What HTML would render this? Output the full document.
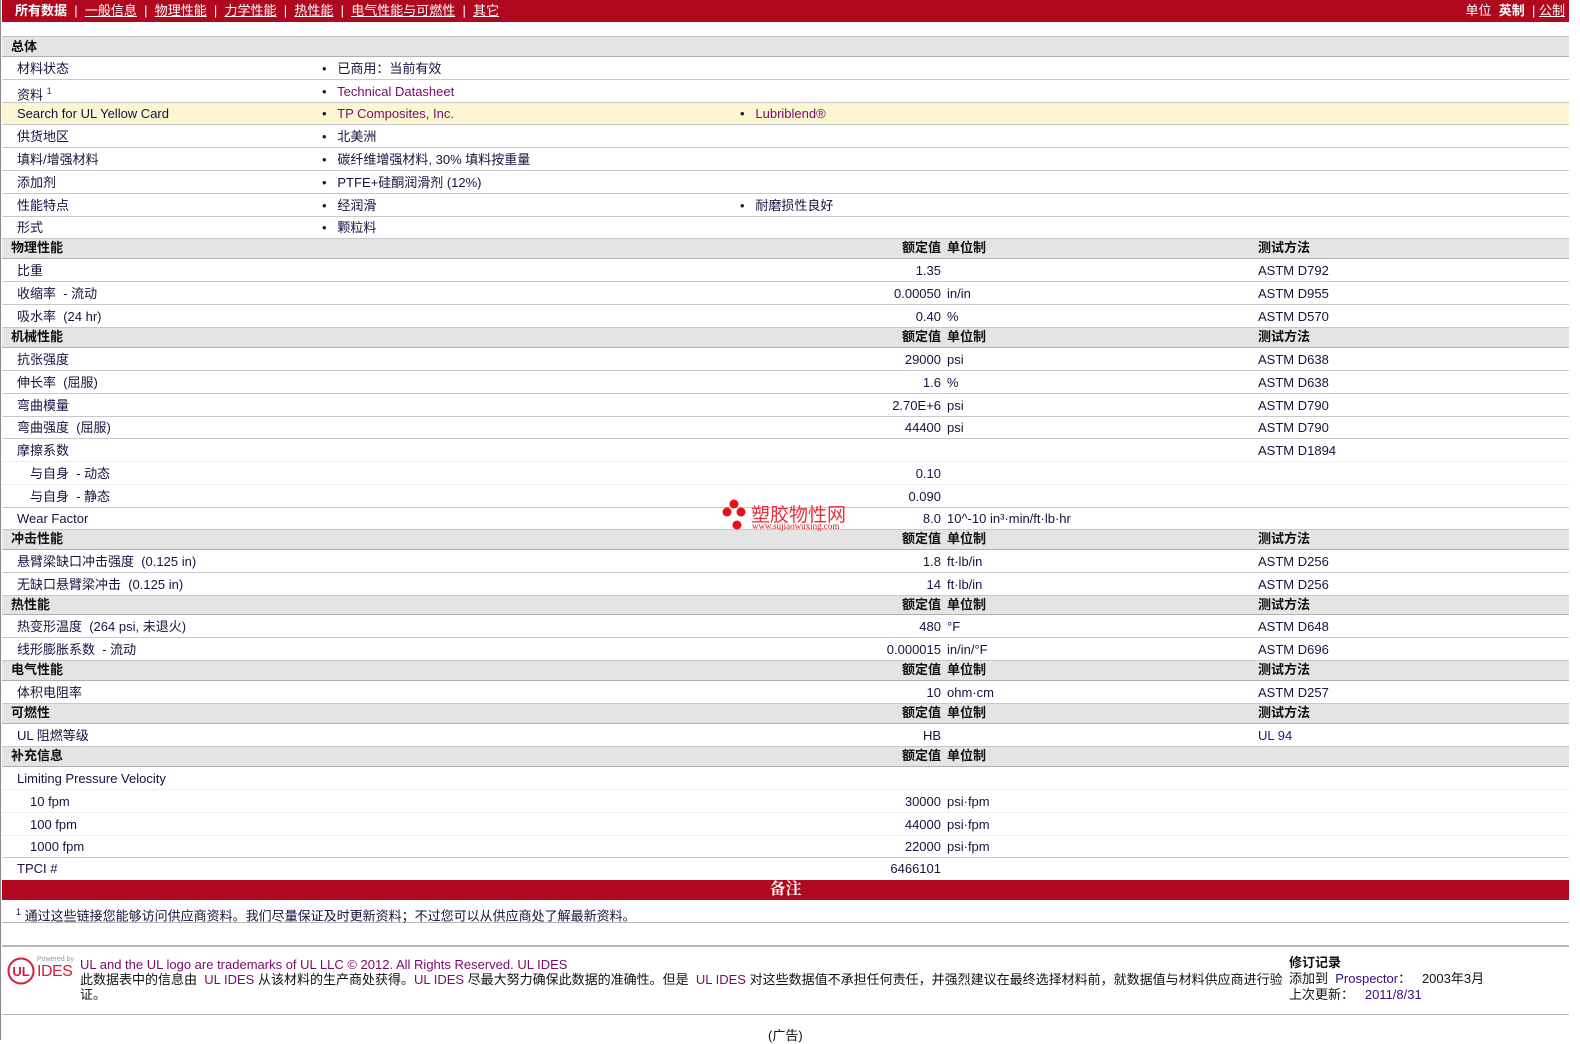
<!DOCTYPE html>
<html><head><meta charset="utf-8"><style>
*{margin:0;padding:0;box-sizing:border-box}
body{width:1580px;height:1040px;background:#fff;font-family:"Liberation Sans","Noto Sans CJK SC",sans-serif;font-size:13px;color:#1a1040;position:relative;overflow:hidden}
.a{position:absolute;white-space:nowrap}
#wrap{position:absolute;left:0;top:0;width:1568px;height:1040px;border-left:1px solid #888}
.bar{position:absolute;left:1px;width:1567px;background:#b0091f;color:#fff}
.r{position:absolute;left:1px;width:1567px;border-bottom:1px solid #c8c8c8}
.h{background:#e4e4e4;font-weight:bold;color:#111;border-bottom:1px solid #b0b0b0}
.r span{position:absolute;top:0}
.l{left:15px}.l2{left:28px}.hl{left:9px}
.v{right:628px;text-align:right}
.u{left:945px}
.m{left:1256px}
.b1{left:320px}.b2{left:738px}
.lk{color:#7a0a6a}
.pu{color:#3a0a80}
.top a{color:#fff;text-decoration:underline}
</style></head><body><div id="wrap">
<div class="bar top" style="top:0;height:22px;line-height:21px;font-size:13px">
<span class="a" style="left:13px"><b>所有数据</b> &nbsp;| &nbsp;<a>一般信息</a> &nbsp;| &nbsp;<a>物理性能</a> &nbsp;| &nbsp;<a>力学性能</a> &nbsp;| &nbsp;<a>热性能</a> &nbsp;| &nbsp;<a>电气性能与可燃性</a> &nbsp;| &nbsp;<a>其它</a></span>
<span class="a" style="right:4px">单位 &nbsp;<b>英制</b> &nbsp;| <a>公制</a></span>
</div>
<div class="r" style="top:22px;height:15px;border-bottom:1px solid #c0c0c0"></div>

<div class="r h" style="top:37px;height:20px;line-height:19px"><span class="hl">总体</span></div>
<div class="r" style="top:57px;height:23px;line-height:23px"><span class="l">材料状态</span><span class="b1">•&nbsp;&nbsp; 已商用：当前有效</span></div>
<div class="r" style="top:80px;height:23px;line-height:23px"><span class="l">资料 <sup class="lk" style="font-size:9px">1</sup></span><span class="b1">•&nbsp;&nbsp; <span class="lk" style="position:static">Technical Datasheet</span></span></div>
<div class="r" style="top:103px;height:22px;line-height:22px;background:#fbf7d2"><span class="l">Search for UL Yellow Card</span><span class="b1">•&nbsp;&nbsp; <span class="lk" style="position:static">TP Composites, Inc.</span></span><span class="b2">•&nbsp;&nbsp; <span class="lk" style="position:static">Lubriblend®</span></span></div>
<div class="r" style="top:125px;height:23px;line-height:23px"><span class="l">供货地区</span><span class="b1">•&nbsp;&nbsp; 北美洲</span></div>
<div class="r" style="top:148px;height:23px;line-height:23px"><span class="l">填料/增强材料</span><span class="b1">•&nbsp;&nbsp; 碳纤维增强材料, 30% 填料按重量</span></div>
<div class="r" style="top:171px;height:23px;line-height:23px"><span class="l">添加剂</span><span class="b1">•&nbsp;&nbsp; PTFE+硅酮润滑剂 (12%)</span></div>
<div class="r" style="top:194px;height:23px;line-height:23px"><span class="l">性能特点</span><span class="b1">•&nbsp;&nbsp; 经润滑</span><span class="b2">•&nbsp;&nbsp; 耐磨损性良好</span></div>
<div class="r" style="top:217px;height:22px;line-height:22px"><span class="l">形式</span><span class="b1">•&nbsp;&nbsp; 颗粒料</span></div>

<div class="r h" style="top:239px;height:20px;line-height:18px"><span class="hl">物理性能</span><span class="v">额定值</span><span class="u">单位制</span><span class="m">测试方法</span></div>
<div class="r" style="top:259px;height:23px;line-height:23px"><span class="l">比重</span><span class="v">1.35</span><span class="m">ASTM D792</span></div>
<div class="r" style="top:282px;height:23px;line-height:23px"><span class="l">收缩率 &nbsp;- 流动</span><span class="v">0.00050</span><span class="u">in/in</span><span class="m">ASTM D955</span></div>
<div class="r" style="top:305px;height:23px;line-height:23px"><span class="l">吸水率 &nbsp;(24 hr)</span><span class="v">0.40</span><span class="u">%</span><span class="m">ASTM D570</span></div>

<div class="r h" style="top:328px;height:20px;line-height:18px"><span class="hl">机械性能</span><span class="v">额定值</span><span class="u">单位制</span><span class="m">测试方法</span></div>
<div class="r" style="top:348px;height:23px;line-height:23px"><span class="l">抗张强度</span><span class="v">29000</span><span class="u">psi</span><span class="m">ASTM D638</span></div>
<div class="r" style="top:371px;height:23px;line-height:23px"><span class="l">伸长率 &nbsp;(屈服)</span><span class="v">1.6</span><span class="u">%</span><span class="m">ASTM D638</span></div>
<div class="r" style="top:394px;height:23px;line-height:23px"><span class="l">弯曲模量</span><span class="v">2.70E+6</span><span class="u">psi</span><span class="m">ASTM D790</span></div>
<div class="r" style="top:417px;height:22px;line-height:22px"><span class="l">弯曲强度 &nbsp;(屈服)</span><span class="v">44400</span><span class="u">psi</span><span class="m">ASTM D790</span></div>
<div class="r" style="top:439px;height:23px;line-height:23px;border-bottom-color:#eee"><span class="l">摩擦系数</span><span class="m">ASTM D1894</span></div>
<div class="r" style="top:462px;height:23px;line-height:23px;border-bottom-color:#eee"><span class="l2">与自身 &nbsp;- 动态</span><span class="v">0.10</span></div>
<div class="r" style="top:485px;height:23px;line-height:23px"><span class="l2">与自身 &nbsp;- 静态</span><span class="v">0.090</span></div>
<div class="r" style="top:508px;height:22px;line-height:22px"><span class="l">Wear Factor</span><span class="v">8.0</span><span class="u">10^-10 in³·min/ft·lb·hr</span></div>

<div class="r h" style="top:530px;height:20px;line-height:18px"><span class="hl">冲击性能</span><span class="v">额定值</span><span class="u">单位制</span><span class="m">测试方法</span></div>
<div class="r" style="top:550px;height:23px;line-height:23px"><span class="l">悬臂梁缺口冲击强度 &nbsp;(0.125 in)</span><span class="v">1.8</span><span class="u">ft·lb/in</span><span class="m">ASTM D256</span></div>
<div class="r" style="top:573px;height:23px;line-height:23px"><span class="l">无缺口悬臂梁冲击 &nbsp;(0.125 in)</span><span class="v">14</span><span class="u">ft·lb/in</span><span class="m">ASTM D256</span></div>

<div class="r h" style="top:596px;height:19px;line-height:18px"><span class="hl">热性能</span><span class="v">额定值</span><span class="u">单位制</span><span class="m">测试方法</span></div>
<div class="r" style="top:615px;height:23px;line-height:23px"><span class="l">热变形温度 &nbsp;(264 psi, 未退火)</span><span class="v">480</span><span class="u">°F</span><span class="m">ASTM D648</span></div>
<div class="r" style="top:638px;height:23px;line-height:23px"><span class="l">线形膨胀系数 &nbsp;- 流动</span><span class="v">0.000015</span><span class="u">in/in/°F</span><span class="m">ASTM D696</span></div>

<div class="r h" style="top:661px;height:20px;line-height:18px"><span class="hl">电气性能</span><span class="v">额定值</span><span class="u">单位制</span><span class="m">测试方法</span></div>
<div class="r" style="top:681px;height:23px;line-height:23px"><span class="l">体积电阻率</span><span class="v">10</span><span class="u">ohm·cm</span><span class="m">ASTM D257</span></div>

<div class="r h" style="top:704px;height:20px;line-height:18px"><span class="hl">可燃性</span><span class="v">额定值</span><span class="u">单位制</span><span class="m">测试方法</span></div>
<div class="r" style="top:724px;height:23px;line-height:23px"><span class="l">UL 阻燃等级</span><span class="v">HB</span><span class="m pu">UL 94</span></div>

<div class="r h" style="top:747px;height:20px;line-height:18px"><span class="hl">补充信息</span><span class="v">额定值</span><span class="u">单位制</span></div>
<div class="r" style="top:767px;height:23px;line-height:23px;border-bottom-color:#eee"><span class="l">Limiting Pressure Velocity</span></div>
<div class="r" style="top:790px;height:23px;line-height:23px;border-bottom-color:#eee"><span class="l2">10 fpm</span><span class="v">30000</span><span class="u">psi·fpm</span></div>
<div class="r" style="top:813px;height:23px;line-height:23px;border-bottom-color:#eee"><span class="l2">100 fpm</span><span class="v">44000</span><span class="u">psi·fpm</span></div>
<div class="r" style="top:836px;height:22px;line-height:22px"><span class="l2">1000 fpm</span><span class="v">22000</span><span class="u">psi·fpm</span></div>
<div class="r" style="top:858px;height:22px;line-height:22px;border-bottom:none"><span class="l">TPCI #</span><span class="v">6466101</span></div>

<div class="bar" style="top:880px;height:20px;line-height:19px;text-align:center;font-size:16px;font-weight:bold;font-family:'Liberation Serif','Noto Serif CJK SC',serif">备注</div>
<div class="r" style="top:900px;height:23px;line-height:25px;border-bottom-color:#b8b8b8"><span class="l" style="left:14px"><sup style="font-size:9px">1</sup> 通过这些链接您能够访问供应商资料。我们尽量保证及时更新资料；不过您可以从供应商处了解最新资料。</span></div>
<div class="r" style="top:923px;height:23px;border-bottom-color:#b8b8b8"></div>

<svg class="a" style="left:5px;top:956px" width="30" height="30" viewBox="0 0 30 30"><circle cx="15" cy="15" r="12.5" fill="none" stroke="#d0203a" stroke-width="2"/><text x="15" y="20" text-anchor="middle" font-family="Liberation Sans" font-weight="bold" font-size="13" fill="#d0203a">UL</text></svg>
<span class="a" style="left:36px;top:956px;font-size:7px;color:#999">Powered by</span>
<span class="a" style="left:36px;top:963px;font-size:16px;color:#d0203a;letter-spacing:-0.5px">IDES</span>
<div class="a" style="left:79px;top:957px;line-height:15px;color:#111">
<span class="lk">UL and the UL logo are trademarks of UL LLC © 2012. All Rights Reserved. UL IDES</span><br>
此数据表中的信息由 &nbsp;<span class="lk">UL IDES</span> 从该材料的生产商处获得。<span class="lk">UL IDES</span> 尽最大努力确保此数据的准确性。但是 &nbsp;<span class="lk">UL IDES</span> 对这些数据值不承担任何责任，并强烈建议在最终选择材料前，就数据值与材料供应商进行验<br>证。</div>
<div class="a" style="left:1288px;top:955px;line-height:16px;color:#111"><b style="font-size:13px">修订记录</b><br>添加到 &nbsp;<span class="pu">Prospector</span>： &nbsp;&nbsp;2003年3月<br>上次更新： &nbsp;&nbsp;<span class="pu">2011/8/31</span></div>
<div class="r" style="top:946px;height:69px;border-bottom-color:#b8b8b8;border-top:1px solid #b8b8b8;background:transparent"></div>
<span class="a" style="left:767px;top:1025px;color:#111">(广告)</span>

<svg class="a" style="left:721px;top:498px" width="26" height="34"><circle cx="12" cy="6" r="4.5" fill="#e8101a"/><circle cx="5" cy="14" r="4.5" fill="#e8101a"/><circle cx="19" cy="14" r="4.5" fill="#e8101a"/><circle cx="15" cy="27" r="4.5" fill="#e8101a"/></svg>
<span class="a" style="left:750px;top:500px;font-size:19px;color:#e8303a">塑胶物性网</span>
<span class="a" style="left:751px;top:521px;font-size:9px;color:#d02020;font-family:'Liberation Serif',serif">www.sujiaowuxing.com</span>
</div></body></html>
